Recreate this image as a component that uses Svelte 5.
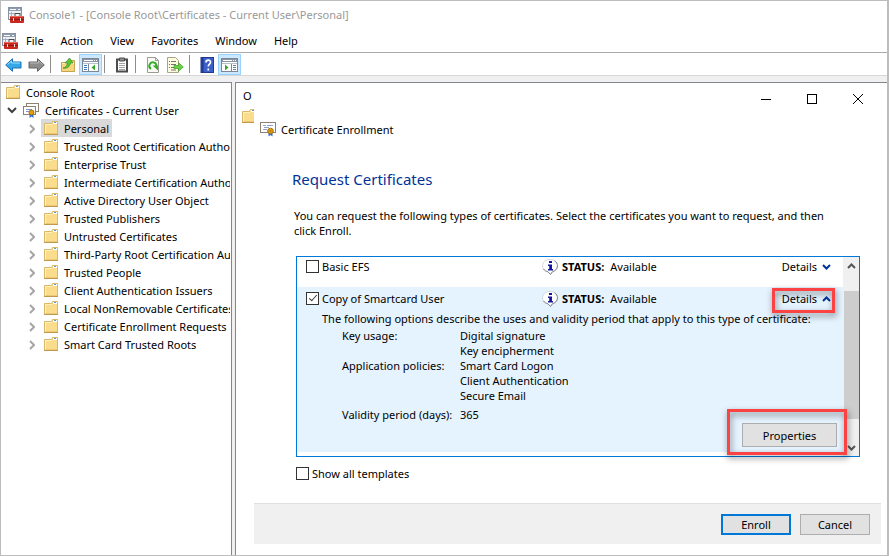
<script lang="ts">
	const menus = ["File", "Action", "View", "Favorites", "Window", "Help"];

	const stores = [
		"Personal",
		"Trusted Root Certification Authorities",
		"Enterprise Trust",
		"Intermediate Certification Authorities",
		"Active Directory User Object",
		"Trusted Publishers",
		"Untrusted Certificates",
		"Third-Party Root Certification Authorities",
		"Trusted People",
		"Client Authentication Issuers",
		"Local NonRemovable Certificates",
		"Certificate Enrollment Requests",
		"Smart Card Trusted Roots",
	];

	let templates = $state([
		{ name: "Basic EFS", status: "Available", checked: false, open: false },
		{ name: "Copy of Smartcard User", status: "Available", checked: true, open: true },
	]);

	const options = [
		{ label: "Key usage:", values: ["Digital signature", "Key encipherment"] },
		{
			label: "Application policies:",
			values: ["Smart Card Logon", "Client Authentication", "Secure Email"],
		},
		{ label: "Validity period (days):", values: ["365"] },
	];

	let selected = $state("Personal");
	let expanded = $state(true);
	let showAll = $state(false);
</script>

{#snippet folder()}
	<svg class="folder" width="16" height="16" viewBox="0 0 16 16" aria-hidden="true">
		<path d="M.5 3.500h7l1-2h5v12.500H.5z" fill="#f9dc8c" stroke="#d9b869" />
		<path d="M1 4.500h7M1.500 4.500v9" stroke="#fff0bd" fill="none" />
		<path d="M9 2h4v2H9z" fill="#fff" />
		<path d="M10 2.500h2" stroke="#5f9bc9" />
		<path d="M0 14.500h14" stroke="#c39a4c" />
	</svg>
{/snippet}

{#snippet consoleIcon()}
	<svg width="16" height="16" viewBox="0 0 16 16" aria-hidden="true">
		<rect x="0.5" y="0.5" width="13" height="12" fill="#eef1f5" stroke="#8793a3" />
		<path d="M1 1h12v3H1z" fill="#8d9bad" />
		<path d="M2 2.500h6M10 2.500h2" stroke="#fff" />
		<path d="M3.500 5v7M1 6.500h12" stroke="#a3afbd" />
		<path d="M7 9V6.500h5V9" fill="none" stroke="#4b4b4b" />
		<rect x="2" y="9" width="14" height="7" rx="1" fill="#c9281f" />
		<path d="M3 9.500h12" stroke="#ec6a5c" />
		<path d="M2 12.500h14" stroke="#8d1711" />
		<path d="M5 11h1v3H5zM12 11h1v3h-1z" fill="#f4e5e2" />
	</svg>
{/snippet}

{#snippet certificate()}
	<svg width="16" height="16" viewBox="0 0 16 16" aria-hidden="true">
		<rect x="0.5" y="1.500" width="15" height="10" fill="#fff" stroke="#8d8272" />
		<path d="M3 4.500h3M7 4.500h6M4 6.500h5M3 8.500h4" stroke="#8ea3cf" />
		<path d="M8.500 11v4.500l2-1.500 2 1.500V11z" fill="#2f6fe0" />
		<circle cx="10.500" cy="10" r="2.800" fill="#e0a010" stroke="#a87008" />
		<circle cx="10.500" cy="10" r="1" fill="#b87c0a" />
	</svg>
{/snippet}

{#snippet panes(left: boolean)}
	<svg width="17" height="16" viewBox="0 0 17 16" aria-hidden="true">
		<rect x="0.500" y="1.500" width="16" height="13" fill="#fff" stroke="#7c8796" />
		<path d="M1 2h15v3H1z" fill="#8a95a5" />
		<path d="M2 3.500h9M12 3.500h1M14 3.500h1" stroke="#fff" />
		<path d="M1 6.500h15" stroke="#b9c1cb" />
		{#if left}
			<path d="M6.500 7v7" stroke="#7c8796" />
			<path d="M2 8.500h3M2 10.500h3M2 12.500h3" stroke="#3c78c0" />
			<path d="M13 7.500v6L9.500 10.500z" fill="#35a82a" />
		{:else}
			<path d="M10.500 7v7" stroke="#7c8796" />
			<path d="M12 8.500h3M12 10.500h3M12 12.500h3" stroke="#6b7f99" />
			<path d="M4 7.500v6l3.500-3z" fill="#35a82a" />
		{/if}
	</svg>
{/snippet}

<div class="window">
	<header class="title-bar">
		{@render consoleIcon()}
		<span>Console1 - [Console Root\Certificates - Current User\Personal]</span>
	</header>

	<nav class="menu-bar">
		{@render consoleIcon()}
		<div class="menus">
			{#each menus as menu}
				<button>{menu}</button>
			{/each}
		</div>
	</nav>

	<div class="toolbar">
		<button aria-label="Back">
			<svg width="17" height="16" viewBox="0 0 17 16">
				<path d="M.700 8 7.500 1.700V5h8.500v6H7.500v3.300z" fill="#35a9e8" stroke="#1b70b5" />
				<path d="M2.500 7.500 6.500 4v2h8.500" fill="none" stroke="#9be0fb" />
			</svg>
		</button>
		<button aria-label="Forward">
			<svg width="17" height="16" viewBox="0 0 17 16">
				<path d="M16.300 8 9.500 1.700V5H1v6h8.500v3.300z" fill="#8c8c8c" stroke="#636363" />
				<path d="M2 6h8.500V4l4 3.500" fill="none" stroke="#b9b9b9" />
			</svg>
		</button>
		<span class="separator"></span>
		<button aria-label="Up one level">
			<svg width="16" height="16" viewBox="0 0 16 16">
				<path d="M1.500 5.500h7l1-2h5v11h-13z" fill="#f6d67d" stroke="#c8a24e" />
				<path d="M2 6.500h12" stroke="#fff0b8" />
				<path d="M3 11c3-.500 4-2 4.500-5H5l4.500-5L13 6h-2.500C10 9.500 7 12 3 11z" fill="#58c935" stroke="#368b22" stroke-width="0.700" />
			</svg>
		</button>
		<button class="active" aria-label="Show console tree">{@render panes(true)}</button>
		<span class="separator"></span>
		<button aria-label="Paste">
			<svg width="14" height="16" viewBox="0 0 14 16">
				<rect x="2" y="2.500" width="10" height="12" fill="#fff" stroke="#4c4c4c" stroke-width="2" />
				<path d="M4.500 1h5v3h-5z" fill="#8f8f8f" stroke="#4c4c4c" />
				<path d="M4 6.500h6M4 8.500h6M4 10.500h6M4 12.500h6" stroke="#a3a3a3" />
			</svg>
		</button>
		<span class="separator"></span>
		<button aria-label="Refresh">
			<svg width="14" height="16" viewBox="0 0 14 16">
				<path d="M1.500.500h8l3 3v12h-11z" fill="#fbfbf6" stroke="#9b9b91" />
				<path d="M9.500.500v3h3" fill="none" stroke="#9b9b91" />
				<path d="M5 11.800a3.500 3.500 0 1 1 5.300-2.800" fill="none" stroke="#36ae2b" stroke-width="2" />
				<path d="M6.500 8.500h5.500v5z" fill="#36ae2b" />
			</svg>
		</button>
		<button aria-label="Export list">
			<svg width="17" height="16" viewBox="0 0 17 16">
				<path d="M.500.500h8l3 3v12H.500z" fill="#fffbe1" stroke="#aaa387" />
				<path d="M2 4.500h1M2 7.500h1M2 10.500h1M4 4.500h5M4 7.500h5M4 10.500h4M4 13h5" stroke="#77756b" />
				<path d="M7 8.500h4.500V5.700L16.300 10l-4.800 4.300v-2.800H7z" fill="#69cf43" stroke="#3b9d27" stroke-width="0.700" />
			</svg>
		</button>
		<span class="separator"></span>
		<button aria-label="Help">
			<svg width="14" height="16" viewBox="0 0 14 16">
				<rect x="1" y="0.500" width="12.500" height="15" fill="#3c5fc8" stroke="#223b8c" />
				<path d="M2.500 1v14" stroke="#1f3994" stroke-width="2" />
				<path d="M6 5.500c0-3 4.500-3 4.500-.300 0 2-2.200 2-2.200 4.300M8.300 11.500v2" fill="none" stroke="#fff" stroke-width="1.700" />
			</svg>
		</button>
		<button class="active" aria-label="Show action pane">{@render panes(false)}</button>
	</div>

	<main class="workspace">
		<aside class="tree">
			<button class="node root">
				{@render folder()}
				<span>Console Root</span>
			</button>
			<button class="node branch" onclick={() => (expanded = !expanded)}>
				<svg class="arrow" width="10" height="8" viewBox="0 0 10 8">
					<path d="m1 2 4 4 4-4" fill="none" stroke="#404040" stroke-width="2" />
				</svg>
				<svg width="16" height="16" viewBox="0 0 16 16">
					<rect x="3.500" y="1.500" width="12" height="8" fill="#fff" stroke="#8d8272" />
					<rect x="0.500" y="4.500" width="12" height="8" fill="#fff" stroke="#8d8272" />
					<path d="M3 7.500h6M3 9.500h3" stroke="#7d97cf" />
					<path d="M6.500 11v5l2-1.500 2 1.500v-5z" fill="#2f6fe0" />
					<circle cx="8.500" cy="10.500" r="2.500" fill="#e0a010" stroke="#a87008" />
				</svg>
				<span>Certificates - Current User</span>
			</button>
			{#if expanded}
				<ul>
					{#each stores as store}
						<li>
							<svg class="arrow" width="6" height="12" viewBox="0 0 6 12">
								<path d="m1 3 4 4-4 4" fill="none" stroke="#a6a6a6" stroke-width="2" />
							</svg>
							<button
								class="node store"
								class:selected={selected === store}
								onclick={() => (selected = store)}
							>
								{@render folder()}
								<span>{store}</span>
							</button>
						</li>
					{/each}
				</ul>
			{/if}
		</aside>

		<section class="content">
			<div class="objects">
				<span>O</span>
				{@render folder()}
			</div>

			<div class="dialog" role="dialog" aria-labelledby="dialog-title">
				<div class="window-controls">
					<button aria-label="Minimize">
						<svg width="12" height="12" viewBox="0 0 12 12"><path d="M1 6.500h10" stroke="#000" /></svg>
					</button>
					<button aria-label="Maximize">
						<svg width="12" height="12" viewBox="0 0 12 12">
							<rect x="1.500" y="1.500" width="9" height="9" fill="none" stroke="#000" />
						</svg>
					</button>
					<button aria-label="Close">
						<svg width="12" height="12" viewBox="0 0 12 12"><path d="m1 1 10 10M11 1 1 11" stroke="#000" /></svg>
					</button>
				</div>

				<div class="dialog-title" id="dialog-title">
					{@render certificate()}
					<span>Certificate Enrollment</span>
				</div>

				<div class="dialog-body">
					<h1>Request Certificates</h1>
					<p>
						You can request the following types of certificates. Select the certificates you want to
						request, and then click Enroll.
					</p>

					<div class="list-box">
						<div class="templates">
							{#each templates as template}
								<div class="template" class:open={template.open}>
									<div class="template-row">
										<label>
											<input type="checkbox" bind:checked={template.checked} />
											{template.name}
										</label>
										<div class="status">
											<svg width="16" height="16" viewBox="0 0 16 16" aria-hidden="true">
												<path d="M8 .500c4.500 0 7.500 2.800 7.500 6.300 0 3-2 5-5 5.900L8.500 15.500 6 12.800C2.500 12 .500 9.800.500 6.800.500 3.300 3.500.500 8 .500z" fill="#fff" stroke="#d3d6da" />
												<path d="M12.500 1.800c2 1.200 3 3 3 5 0 3-2 5-5 5.900L8.500 15.500 6 12.800C4 12.300 2.500 11.500 1.500 10" fill="none" stroke="#80868f" />
												<path d="M7 2h3v2H7zM6 5.500h4V10h1v1.500H6V10h1.200V7H6z" fill="#17179b" />
											</svg>
											<b>STATUS:</b>
											<span>{template.status}</span>
										</div>
										<button
											class="details"
											class:marked={template.open}
											onclick={() => (template.open = !template.open)}
										>
											Details
											<svg width="9" height="6" viewBox="0 0 9 6" aria-hidden="true">
												<path
													d={template.open ? "m1 5 3.500-3.500L8 5" : "m1 1 3.500 3.500L8 1"}
													fill="none"
													stroke="#003399"
													stroke-width="2"
												/>
											</svg>
										</button>
									</div>
									{#if template.open}
										<div class="description">
											The following options describe the uses and validity period that apply to this
											type of certificate:
										</div>
										<dl>
											{#each options as option}
												<dt>{option.label}</dt>
												<dd>
													{#each option.values as value}
														<div>{value}</div>
													{/each}
												</dd>
											{/each}
										</dl>
										<div class="template-actions">
											<div class="properties marked">
												<button class="push">Properties</button>
											</div>
										</div>
									{/if}
								</div>
							{/each}
						</div>
						<div class="scrollbar">
							<svg width="9" height="6" viewBox="0 0 9 6" aria-hidden="true">
								<path d="m1 5 3.500-3.500L8 5" fill="none" stroke="#555" stroke-width="2" />
							</svg>
							<div class="thumb"></div>
							<svg width="9" height="6" viewBox="0 0 9 6" aria-hidden="true">
								<path d="m1 1 3.500 3.500L8 1" fill="none" stroke="#555" stroke-width="2" />
							</svg>
						</div>
					</div>

					<label class="show-all">
						<input type="checkbox" bind:checked={showAll} />
						Show all templates
					</label>
				</div>

				<footer>
					<button class="push primary">Enroll</button>
					<button class="push">Cancel</button>
				</footer>
			</div>
		</section>
	</main>
</div>

<style>
	:global(body) {
		background: #fff;
	}

	.window {
		box-sizing: border-box;
		min-height: 100vh;
		display: flex;
		flex-direction: column;
		border: 1px solid #bdbdbd;
		border-right-width: 2px;
		background: #fff;
		color: #000;
		font: 11px/15px "Noto Sans", "Open Sans", sans-serif;
	}

	svg {
		display: block;
		flex: none;
	}

	button {
		margin: 0;
		padding: 0;
		border: 0;
		background: none;
		color: inherit;
		font: inherit;
	}

	.title-bar {
		display: flex;
		align-items: center;
		gap: 5px;
		height: 27px;
		padding: 0 0 1px 7px;
		color: #999;
	}

	.menu-bar {
		display: flex;
		align-items: center;
		gap: 8px;
		height: 23px;
		padding-left: 1px;
		border-bottom: 1px solid #aaa;
	}

	.menus {
		display: flex;
		gap: 17px;
	}

	.toolbar {
		display: flex;
		align-items: flex-end;
		height: 22px;
		padding-left: 1px;
		border-bottom: 1px solid #d7d7d7;
	}

	.toolbar button {
		box-sizing: border-box;
		display: flex;
		align-items: center;
		justify-content: center;
		width: 23px;
		height: 21px;
		border: 1px solid transparent;
	}

	.toolbar .active {
		border-color: #99d1ff;
		background: #cce8ff;
	}

	.separator {
		align-self: center;
		width: 1px;
		height: 18px;
		margin: 0 5px 0 2px;
		background: #8d8d8d;
	}

	.workspace {
		flex: 1;
		display: flex;
		gap: 3px;
		padding-top: 6px;
		background: #f0f0f0;
	}

	.tree {
		box-sizing: border-box;
		flex: none;
		width: 231px;
		padding-right: 1px;
		border-top: 1px solid #828790;
		border-right: 1px solid #828790;
		background: #fff;
		white-space: nowrap;
	}

	.node {
		display: flex;
		align-items: center;
		height: 18px;
	}

	.root {
		gap: 4px;
		padding-left: 5px;
	}

	.branch {
		gap: 6px;
		padding-left: 6px;
	}

	.tree ul {
		overflow: hidden;
		margin: 0;
		padding: 0;
		list-style: none;
	}

	.tree li {
		display: flex;
		align-items: center;
		gap: 6px;
		padding-left: 28px;
	}

	.store {
		gap: 4px;
		padding: 0 3px;
	}

	.selected {
		background: #d9d9d9;
	}

	.content {
		flex: 1;
		min-width: 0;
		display: flex;
		border-top: 1px solid #828790;
		border-left: 1px solid #828790;
		background: #fff;
	}

	.objects {
		flex: none;
		display: flex;
		flex-direction: column;
		gap: 5px;
		box-sizing: border-box;
		width: 18px;
		overflow: hidden;
		padding: 5px 0 0 6px;
	}

	.objects span {
		padding-left: 1px;
	}

	.dialog {
		flex: 1;
		min-width: 0;
		display: flex;
		flex-direction: column;
		padding: 0 6px 11px 0;
	}

	.window-controls {
		display: flex;
		justify-content: flex-end;
		height: 32px;
	}

	.window-controls button {
		display: flex;
		align-items: center;
		justify-content: center;
		width: 46px;
	}

	.dialog-title {
		display: flex;
		align-items: center;
		gap: 5px;
		height: 28px;
		padding-left: 6px;
	}

	.dialog-body {
		flex: 1;
		padding: 25px 21px 0 42px;
	}

	h1 {
		margin: 0 0 18px -4px;
		color: #003399;
		font-size: 15px;
		font-weight: 400;
		line-height: 22px;
	}

	p {
		margin: 0 20px 18px -2px;
	}

	.list-box {
		display: flex;
		border: 1px solid #0078d7;
	}

	.templates {
		flex: 1;
		min-width: 0;
		padding-bottom: 4px;
	}

	.template {
		padding-bottom: 11px;
	}

	.template.open {
		padding-bottom: 5px;
		background: #e5f3ff;
	}

	.template-row {
		display: flex;
		align-items: center;
		height: 19px;
		padding: 0 12px 0 9px;
	}

	.open .template-row {
		height: 23px;
		padding-bottom: 1px;
	}

	label {
		display: flex;
		align-items: center;
		gap: 3px;
	}

	.template-row label {
		flex: 0 0 236px;
	}

	input[type="checkbox"] {
		appearance: none;
		position: relative;
		box-sizing: border-box;
		width: 13px;
		height: 13px;
		margin: 0;
		border: 1px solid #333;
		background: #fff;
	}

	input[type="checkbox"]:checked::after {
		content: "";
		position: absolute;
		left: 4px;
		top: 0;
		width: 3px;
		height: 7px;
		border: solid #333;
		border-width: 0 1px 1px 0;
		transform: rotate(42deg);
	}

	.status {
		display: flex;
		align-items: center;
		gap: 4px;
	}

	.status span {
		padding-left: 2px;
	}

	.details {
		display: flex;
		align-items: center;
		gap: 5px;
		margin-left: auto;
	}

	.marked {
		position: relative;
	}

	.marked::after {
		content: "";
		position: absolute;
		border: 3px solid #fb4343;
		filter: drop-shadow(1px 3px 3px rgb(0 0 0 / 0.5));
		pointer-events: none;
	}

	.details.marked::after {
		inset: -3px -4px -7px -10px;
	}

	.description {
		padding-left: 25px;
		line-height: 16px;
		white-space: nowrap;
	}

	dl {
		display: grid;
		grid-template-columns: 118px 1fr;
		row-gap: 0;
		margin: 0;
		padding: 1px 0 0 45px;
	}

	dt:last-of-type,
	dd:last-of-type {
		padding-top: 4px;
	}

	dd {
		margin: 0;
	}

	.template-actions {
		display: flex;
		justify-content: flex-end;
		padding: 1px 6px 0 0;
	}

	.properties.marked::after {
		inset: -14px -10px -8px -15px;
	}

	.push {
		box-sizing: border-box;
		width: 70px;
		height: 21px;
		border: 1px solid #adadad;
		background: #e1e1e1;
	}

	.properties .push {
		display: block;
		width: 95px;
		height: 24px;
	}

	.push.primary {
		border: 2px solid #0078d7;
	}

	.scrollbar {
		flex: none;
		display: flex;
		flex-direction: column;
		align-items: center;
		width: 16px;
		padding: 6px 0 5px;
		background: #f0f0f0;
	}

	.thumb {
		flex: 1;
		width: 15px;
		margin: 22px 0 26px;
		background: #cdcdcd;
	}

	.show-all {
		margin-top: 9px;
	}

	footer {
		display: flex;
		justify-content: flex-end;
		align-items: center;
		gap: 9px;
		height: 40px;
		padding-right: 11px;
		border-top: 1px solid #dfdfdf;
		background: #f0f0f0;
	}
</style>
